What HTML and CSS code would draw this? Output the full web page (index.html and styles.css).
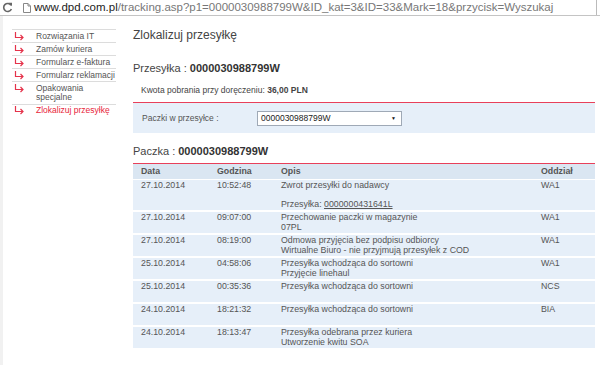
FILE: index.html
```html
<!DOCTYPE html>
<html lang="pl">
<head>
  <meta charset="UTF-8">
  <title>DPD - Zlokalizuj przesyłkę</title>
  <link rel="stylesheet" href="styles.css">
</head>
<body>
  <div class="addressbar">
    <svg class="reload" width="11" height="11" viewBox="0 0 11 11">
      <path d="M9 3.2 A4 4 0 1 0 9.4 7" fill="none" stroke="#666" stroke-width="1.6"/>
      <path d="M6.6 0.8 L10 0.8 L10 4.3 Z" fill="#666"/>
    </svg>
    <svg class="doc" width="8" height="10" viewBox="0 0 8 10">
      <path d="M0.5 0.5 H5 L7.5 3 V9.5 H0.5 Z M5 0.5 V3 H7.5" fill="#fff" stroke="#888" stroke-width="1"/>
    </svg>
    <span class="url"><span class="host">www.dpd.com.pl</span>/tracking.asp?p1=0000030988799W&amp;ID_kat=3&amp;ID=33&amp;Mark=18&amp;przycisk=Wyszukaj</span>
  </div>

  <div class="page">
    <nav class="sidebar">
      <ul>
        <li><svg class="arrow" width="10" height="9" viewBox="0 0 10 9"><path d="M1.5 0 V5.5 H9 M6.5 3 L9 5.5 L6.5 8" fill="none" stroke="#e5334b" stroke-width="1.2"/></svg><span>Rozwiązania IT</span></li>
        <li><svg class="arrow" width="10" height="9" viewBox="0 0 10 9"><path d="M1.5 0 V5.5 H9 M6.5 3 L9 5.5 L6.5 8" fill="none" stroke="#e5334b" stroke-width="1.2"/></svg><span>Zamów kuriera</span></li>
        <li><svg class="arrow" width="10" height="9" viewBox="0 0 10 9"><path d="M1.5 0 V5.5 H9 M6.5 3 L9 5.5 L6.5 8" fill="none" stroke="#e5334b" stroke-width="1.2"/></svg><span>Formularz e-faktura</span></li>
        <li><svg class="arrow" width="10" height="9" viewBox="0 0 10 9"><path d="M1.5 0 V5.5 H9 M6.5 3 L9 5.5 L6.5 8" fill="none" stroke="#e5334b" stroke-width="1.2"/></svg><span>Formularz reklamacji</span></li>
        <li><svg class="arrow" width="10" height="9" viewBox="0 0 10 9"><path d="M1.5 0 V5.5 H9 M6.5 3 L9 5.5 L6.5 8" fill="none" stroke="#e5334b" stroke-width="1.2"/></svg><span>Opakowania<br>specjalne</span></li>
        <li class="active"><svg class="arrow" width="10" height="9" viewBox="0 0 10 9"><path d="M1.5 0 V5.5 H9 M6.5 3 L9 5.5 L6.5 8" fill="none" stroke="#e5334b" stroke-width="1.2"/></svg><span>Zlokalizuj przesyłkę</span></li>
      </ul>
    </nav>

    <main class="content">
      <h1>Zlokalizuj przesyłkę</h1>

      <h2>Przesyłka : <b>0000030988799W</b></h2>
      <div class="cod">Kwota pobrania przy doręczeniu: <b>36,00 PLN</b></div>

      <div class="parcels">
        <span class="parcels-label">Paczki w przesyłce :</span>
        <div class="select">
          <span>0000030988799W</span>
          <span class="caret">&#9660;</span>
        </div>
      </div>

      <h2 class="parcel-head">Paczka : <b>0000030988799W</b></h2>

      <table class="events">
        <thead>
          <tr><th class="c-date">Data</th><th class="c-time">Godzina</th><th class="c-desc">Opis</th><th class="c-dep">Oddział</th></tr>
        </thead>
        <tbody>
          <tr class="tall"><td>27.10.2014</td><td>10:52:48</td><td>Zwrot przesyłki do nadawcy<br><br>Przesyłka: <a href="#">0000000431641L</a></td><td>WA1</td></tr>
          <tr><td>27.10.2014</td><td>09:07:00</td><td>Przechowanie paczki w magazynie<br>07PL</td><td>WA1</td></tr>
          <tr><td>27.10.2014</td><td>08:19:00</td><td>Odmowa przyjęcia bez podpisu odbiorcy<br>Wirtualne Biuro - nie przyjmują przesyłek z COD</td><td>WA1</td></tr>
          <tr><td>25.10.2014</td><td>04:58:06</td><td>Przesyłka wchodząca do sortowni<br>Przyjęcie linehaul</td><td>WA1</td></tr>
          <tr><td>25.10.2014</td><td>00:35:36</td><td>Przesyłka wchodząca do sortowni</td><td>NCS</td></tr>
          <tr><td>24.10.2014</td><td>18:21:32</td><td>Przesyłka wchodząca do sortowni</td><td>BIA</td></tr>
          <tr><td>24.10.2014</td><td>18:13:47</td><td>Przesyłka odebrana przez kuriera<br>Utworzenie kwitu SOA</td><td></td></tr>
        </tbody>
      </table>
    </main>
  </div>
</body>
</html>
```

FILE: styles.css
```css
html, body {
  margin: 0;
  padding: 0;
  background: #fff;
  font-family: "Liberation Sans", Arial, sans-serif;
  color: #555;
  overflow: hidden;
}

.addressbar {
  display: flex;
  align-items: center;
  height: 15px;
  border-bottom: 1px solid #c4c4c4;
  background: #fff;
}

.addressbar .reload {
  margin-left: 2px;
}

.addressbar .doc {
  margin-left: 10px;
}

.url {
  margin-left: 3px;
  font-size: 11.5px;
  color: #777;
  white-space: nowrap;
  flex: 1;
  border-right: 1px solid #bbb;
  height: 15px;
  line-height: 15px;
  margin-right: 3px;
}

.url .host {
  color: #222;
}

.page {
  display: flex;
  gap: 17px;
  padding-left: 12px;
  border-left: 3px solid #f1f1f1;
  margin-left: 0;
  height: 349px;
}

/* sidebar */

.sidebar {
  width: 104px;
  margin-left: -3px;
  padding-top: 13px;
}

.sidebar ul {
  list-style: none;
  margin: 0;
  padding: 0;
  border-top: 1px solid #dcdcdc;
}

.sidebar li {
  display: flex;
  align-items: flex-start;
  font-size: 8.5px;
  line-height: 9.5px;
  padding: 1.5px 0 1px 2px;
  border-bottom: 1px solid #dcdcdc;
  color: #555;
}

.sidebar li:last-child {
  border-bottom: none;
}

.sidebar li.active {
  color: #e8253a;
}

.sidebar .arrow {
  flex: none;
  margin-right: 12px;
  margin-top: 0;
}

/* main column */

.content {
  width: 462px;
}

h1 {
  font-size: 12px;
  font-weight: normal;
  line-height: 14px;
  color: #444;
  margin: 12px 0 0;
}

h2 {
  font-size: 11px;
  font-weight: normal;
  line-height: 13px;
  color: #444;
  margin: 20px 0 0;
}

h2 b {
  color: #333;
}

.cod {
  font-size: 8.5px;
  line-height: 10px;
  padding: 10px 8px 7px;
  border-bottom: 1px solid #e8405a;
  color: #444;
}

.parcels {
  display: flex;
  align-items: center;
  height: 30px;
  background: #e6eff9;
  padding-left: 9px;
  font-size: 8.5px;
}

.parcels-label {
  width: 115px;
}

.select {
  display: flex;
  align-items: center;
  justify-content: space-between;
  width: 135px;
  height: 13px;
  background: #fff;
  border: 1px solid #9fa9b6;
  font-size: 8.5px;
  padding: 0 5px 0 3px;
  color: #222;
}

.select .caret {
  font-size: 5px;
  color: #111;
}

h2.parcel-head {
  margin-top: 12px;
  margin-bottom: 5px;
}

/* events table */

.events {
  width: 100%;
  border-collapse: separate;
  border-spacing: 0;
  border-top: 1px solid #e8405a;
  font-size: 8.8px;
  line-height: 9.5px;
}

.events th {
  text-align: left;
  font-weight: bold;
  background: #dae6f2;
  height: 16px;
  box-sizing: border-box;
  padding: 0 8px;
  border-bottom: 1px solid #fff;
  color: #555;
}

.events td {
  background: #e6eff9;
  height: 23px;
  box-sizing: border-box;
  vertical-align: top;
  padding: 1.5px 8px 0;
  border-bottom: 2px solid #fff;
}

.events tr.tall td {
  height: 31px;
  padding-top: 1px;
}

.events a {
  color: #555;
}

.c-date { width: 76px; }
.c-time { width: 64px; }
.c-dep { width: 62px; }
```
